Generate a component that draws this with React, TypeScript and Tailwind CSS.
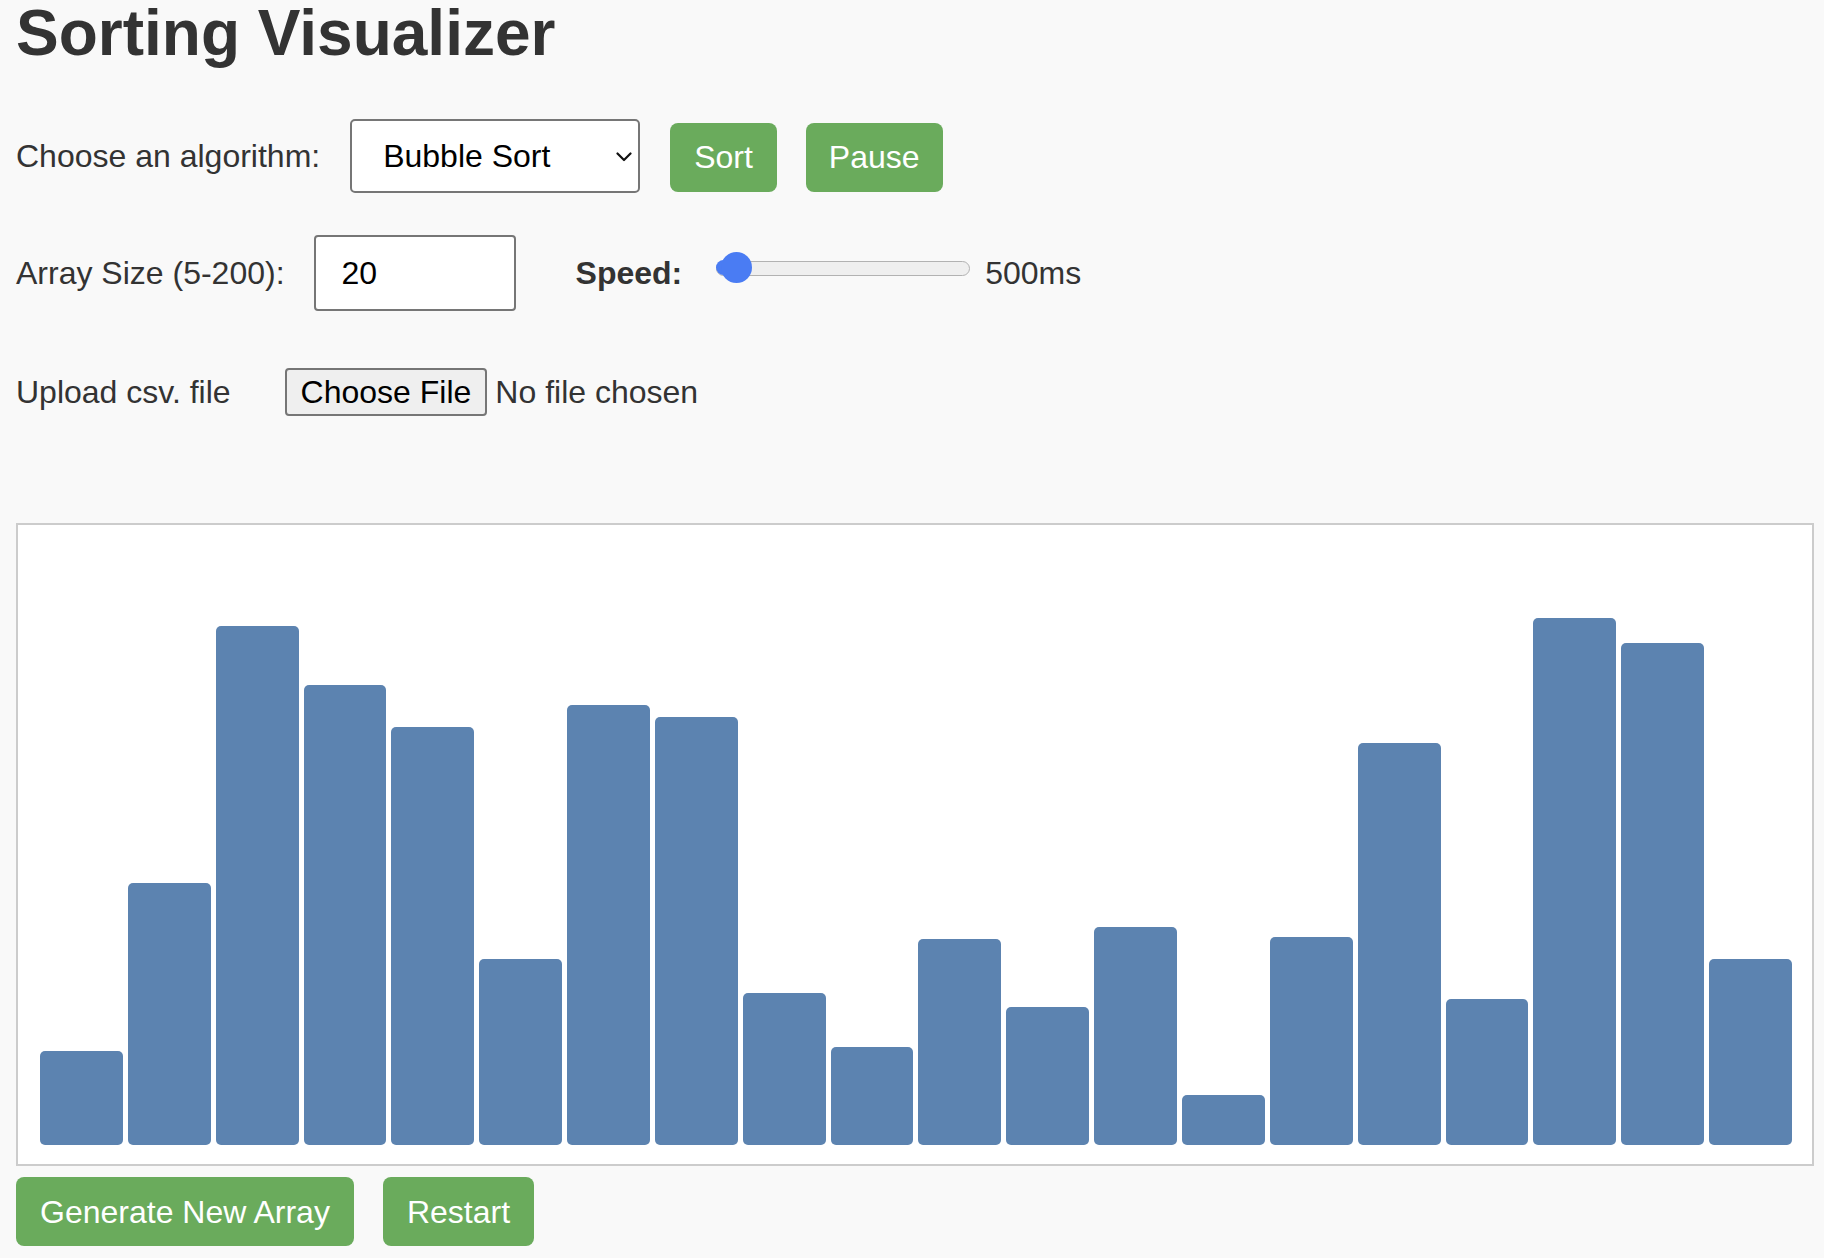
import React from "react";

const heights = [94, 262, 519, 460, 418, 186, 440, 428, 152, 98, 206, 138, 218, 50, 208, 402, 146, 527, 502, 186];

export default function App() {
  return (
    <div className="min-h-[1258px] bg-[#f9f9f9] pl-[16px] pr-[10px] font-['Liberation_Sans',Arial,sans-serif] text-[#333333]">
      <h1 className="pt-[1px] text-[64px] font-bold leading-[64px]">Sorting Visualizer</h1>

      <div className="mt-[54px] flex items-center text-[32px]">
        <label className="mr-[30px]">Choose an algorithm:</label>
        <div className="relative">
          <select className="block h-[74px] w-[290px] appearance-none rounded-[5px] border-2 border-[#767676] bg-white pl-[31px] text-[32px] text-black outline-none">
            <option>Bubble Sort</option>
            <option>Selection Sort</option>
            <option>Insertion Sort</option>
            <option>Merge Sort</option>
            <option>Quick Sort</option>
          </select>
          <svg
            className="pointer-events-none absolute right-[8px] top-[33px]"
            width="16"
            height="10"
            viewBox="0 0 16 10"
            fill="none"
          >
            <path d="M1.5 1.5 L8 8 L14.5 1.5" stroke="#111" strokeWidth="2.2" strokeLinecap="round" strokeLinejoin="round" />
          </svg>
        </div>
        <button className="ml-[30px] mt-[2px] h-[69px] rounded-[8px] bg-[#6aab5c] px-[24px] text-[32px] text-white">Sort</button>
        <button className="ml-[29px] mt-[2px] h-[69px] rounded-[8px] bg-[#6aab5c] px-[23px] text-[32px] text-white">Pause</button>
      </div>

      <div className="mt-[42px] flex items-center text-[32px]">
        <label>Array Size (5-200):</label>
        <input
          className="ml-[29px] h-[76px] w-[202px] rounded-[4px] border-2 border-[#767676] bg-white pl-[26px] text-[32px] text-black outline-none"
          defaultValue="20"
        />
        <span className="ml-[60px] font-bold">Speed:</span>
        <div className="relative mb-[10px] ml-[34px] h-[15px] w-[254px] rounded-full border-[1.5px] border-[#b2b2b2] bg-[#efefef]">
          <div className="absolute -left-[1.5px] -top-[1.5px] h-[15px] w-[22px] rounded-l-full bg-[#4a7cf3]" />
          <div className="absolute left-[4px] top-[-9.5px] h-[31px] w-[31px] rounded-full bg-[#4a7cf3]" />
        </div>
        <span className="ml-[15px]">500ms</span>
      </div>

      <div className="mt-[57px] flex items-center text-[32px]">
        <span>Upload csv. file</span>
        <button className="ml-[54px] flex h-[48px] items-center rounded-[4px] border-2 border-[#767676] bg-[#efefef] px-[14px] text-[32px] text-black">
          Choose File
        </button>
        <span className="ml-[8px]">No file chosen</span>
      </div>

      <div className="mt-[107px] flex h-[643px] items-end gap-[5px] border-2 border-[#cccccc] bg-white pb-[19px] pl-[22px] pr-[20px]">
        {heights.map((h, i) => (
          <div key={i} className="flex-1 rounded-[5px] bg-[#5c83b0]" style={{ height: h }} />
        ))}
      </div>

      <div className="mt-[11px] flex gap-[29px]">
        <button className="h-[69px] rounded-[8px] bg-[#6aab5c] px-[24px] text-[32px] text-white">Generate New Array</button>
        <button className="h-[69px] rounded-[8px] bg-[#6aab5c] px-[24px] text-[32px] text-white">Restart</button>
      </div>
    </div>
  );
}
